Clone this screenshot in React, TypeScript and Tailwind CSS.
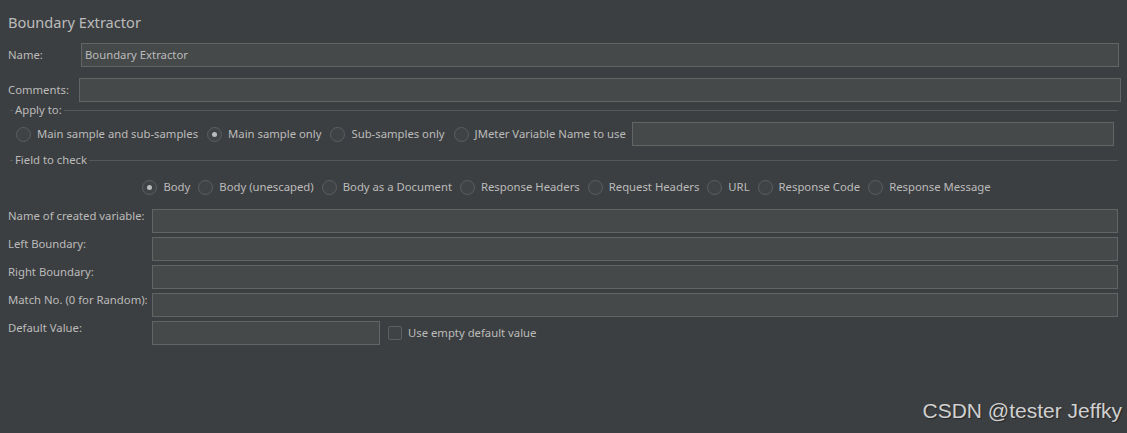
import React from "react";

const F = { fontFamily: '"Noto Sans", "Open Sans", sans-serif' };

function Radio({ checked, label }: { checked?: boolean; label: string }) {
  return (
    <div className="flex items-center shrink-0">
      <div className="w-[15px] h-[15px] rounded-full border border-[#5c5f61] bg-[#3f4345] flex items-center justify-center">
        {checked && <div className="w-[5px] h-[5px] rounded-full bg-[#bbbbbb]" />}
      </div>
      <span className="ml-[6px] text-[11.3px] leading-[16px] whitespace-nowrap">{label}</span>
    </div>
  );
}

function Input({ className = "", value = "" }: { className?: string; value?: string }) {
  return (
    <div className={"h-[24px] bg-[#45494a] border border-[#646464] flex items-center px-[3px] text-[11.3px] " + className}>
      {value}
    </div>
  );
}

function SectionTitle({ label }: { label: string }) {
  return (
    <div className="flex items-center h-[16px]">
      <div className="ml-[10px] w-[3px] h-px bg-[#555859] shrink-0" />
      <span className="px-[2px] text-[11.3px] leading-[16px] shrink-0">{label}</span>
      <div className="flex-1 h-px bg-[#555859] mr-[9px]" />
    </div>
  );
}

function FormRow({ label, children }: { label: string; children: React.ReactNode }) {
  return (
    <div className="flex items-start h-[24px]">
      <div className="w-[152px] shrink-0 pl-[8px] text-[11.3px] leading-[14px] whitespace-nowrap">{label}</div>
      {children}
    </div>
  );
}

export default function App() {
  return (
    <div className="relative w-[1127px] h-[433px] bg-[#3c3f41] text-[#bbbbbb] overflow-hidden flex flex-col" style={F}>
      <div className="mt-[13px] ml-[8px] h-[18px] text-[14.6px] leading-[18px]">Boundary Extractor</div>

      <div className="mt-[12px] flex items-center h-[24px]">
        <div className="w-[81px] shrink-0 pl-[8px] text-[11.3px]">Name:</div>
        <Input className="flex-1 mr-[8px]" value="Boundary Extractor" />
      </div>

      <div className="mt-[11px] flex items-center h-[24px]">
        <div className="w-[79px] shrink-0 pl-[8px] text-[11.3px]">Comments:</div>
        <Input className="flex-1 mr-[6px]" />
      </div>

      <SectionTitle label="Apply to:" />

      <div className="mt-[4px] flex items-center h-[24px] pl-[16px]">
        <div className="flex items-center gap-[9px] shrink-0">
          <Radio label="Main sample and sub-samples" />
          <Radio checked label="Main sample only" />
          <Radio label="Sub-samples only" />
          <Radio label="JMeter Variable Name to use" />
        </div>
        <Input className="flex-1 ml-[6px] mr-[13px]" />
      </div>

      <div className="mt-[6px]">
        <SectionTitle label="Field to check" />
      </div>

      <div className="mt-[7px] h-[24px] flex items-center justify-center pl-[6px]">
        <div className="flex items-center gap-[8px]">
          <Radio checked label="Body" />
          <Radio label="Body (unescaped)" />
          <Radio label="Body as a Document" />
          <Radio label="Response Headers" />
          <Radio label="Request Headers" />
          <Radio label="URL" />
          <Radio label="Response Code" />
          <Radio label="Response Message" />
        </div>
      </div>

      <div className="mt-[10px] flex flex-col gap-[4px]">
        <FormRow label="Name of created variable:">
          <Input className="flex-1 mr-[9px]" />
        </FormRow>
        <FormRow label="Left Boundary:">
          <Input className="flex-1 mr-[9px]" />
        </FormRow>
        <FormRow label="Right Boundary:">
          <Input className="flex-1 mr-[9px]" />
        </FormRow>
        <FormRow label="Match No. (0 for Random):">
          <Input className="flex-1 mr-[9px]" />
        </FormRow>
        <FormRow label="Default Value:">
          <Input className="w-[228px]" />
          <div className="ml-[8px] h-[24px] flex items-center">
            <div className="w-[14px] h-[14px] rounded-[2px] border border-[#5c5f61] bg-[#3f4345]" />
            <span className="ml-[6px] text-[11.3px]">Use empty default value</span>
          </div>
        </FormRow>
      </div>

      <div
        className="absolute right-[5px] bottom-[10px] text-[21px] leading-[24px] text-[#d0d0d0] whitespace-nowrap"
        style={{ fontFamily: '"Liberation Sans", Arial, sans-serif', textShadow: "1px 1px 1px rgba(0,0,0,0.4)" }}
      >
        CSDN @tester Jeffky
      </div>
    </div>
  );
}
